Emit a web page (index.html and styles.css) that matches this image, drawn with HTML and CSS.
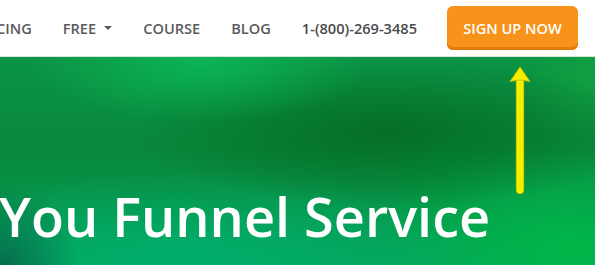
FILE: index.html
```html
<!DOCTYPE html>
<html lang="en">
<head>
<meta charset="utf-8">
<title>Funnel Service</title>
<link rel="stylesheet" href="styles.css">
</head>
<body>
<header class="topbar">
  <nav class="nav">
    <a class="nav-link nav-pricing" href="#">PRICING</a>
    <a class="nav-link" href="#">FREE <span class="caret"></span></a>
    <a class="nav-link" href="#">COURSE</a>
    <a class="nav-link" href="#">BLOG</a>
    <a class="nav-link nav-phone" href="#">1-(800)-269-3485</a>
    <a class="cta" href="#">SIGN UP NOW</a>
  </nav>
</header>
<section class="hero">
  <h1 class="hero-title">You Funnel Service</h1>
  <svg class="arrow" width="30" height="132" viewBox="0 0 30 132" aria-hidden="true">
    <path d="M15 14 L15 124" stroke="#8f8a00" stroke-opacity="0.35" stroke-width="10" stroke-linecap="round" fill="none"/>
    <path d="M15 14 L15 124" stroke="#f4ee00" stroke-width="7.5" stroke-linecap="round" fill="none"/>
    <path d="M15 1 L25 15.5 Q15 12.5 5 15.5 Z" fill="#f4ee00" stroke="#c9c000" stroke-width="0.8" stroke-linejoin="round"/>
  </svg>
</section>
</body>
</html>
```
FILE: styles.css
```css
* { box-sizing: border-box; }
html, body { margin: 0; padding: 0; }
body {
  width: 595px;
  height: 265px;
  overflow: hidden;
  font-family: "Open Sans", "Noto Sans", sans-serif;
  background: #ffffff;
}
.topbar {
  height: 57px;
  background: #ffffff;
  border-bottom: 1px solid #d6e6dc;
  display: flex;
  align-items: center;
  justify-content: flex-end;
  padding-right: 17px;
  overflow: hidden;
}
.nav {
  display: flex;
  align-items: center;
  gap: 31px;
  white-space: nowrap;
}
.nav-link {
  font-size: 14.6px;
  font-weight: 600;
  color: #5a5a5a;
  text-decoration: none;
  display: flex;
  align-items: center;
}
.nav-phone { color: #4a4a4a; margin-right: -1px; }
.caret {
  display: inline-block;
  width: 0;
  height: 0;
  margin-left: 8px;
  border-left: 4px solid transparent;
  border-right: 4px solid transparent;
  border-top: 4px solid #5a5a5a;
}
.cta {
  display: flex;
  align-items: center;
  justify-content: center;
  width: 131px;
  height: 44px;
  margin-top: -1px;
  background: #f7921a;
  border-radius: 6px;
  box-shadow: inset 0 -3px 0 #e17d0b;
  color: #ffffff;
  font-size: 14.6px;
  font-weight: 600;
  text-decoration: none;
}
.hero {
  position: relative;
  height: 208px;
  overflow: hidden;
  background:
    radial-gradient(ellipse 170px 60px at 200px 6px, rgba(10, 190, 90, 0.75), rgba(10, 190, 90, 0) 100%),
    radial-gradient(ellipse 260px 75px at 390px 75px, rgba(4, 100, 30, 0.75), rgba(4, 100, 30, 0) 100%),
    radial-gradient(ellipse 90px 70px at 600px 20px, rgba(20, 170, 60, 0.6), rgba(20, 170, 60, 0) 100%),
    radial-gradient(ellipse 70px 50px at 445px 105px, rgba(0, 150, 55, 0.55), rgba(0, 150, 55, 0) 100%),
    radial-gradient(ellipse 80px 90px at 0px 215px, rgba(6, 90, 70, 0.8), rgba(6, 90, 70, 0) 100%),
    radial-gradient(ellipse 320px 85px at 180px 200px, rgba(0, 175, 110, 0.85), rgba(0, 175, 110, 0) 100%),
    radial-gradient(ellipse 200px 110px at 570px 190px, rgba(0, 185, 70, 0.9), rgba(0, 185, 70, 0) 100%),
    linear-gradient(180deg, #0b9446 0%, #08883c 45%, #05a55a 100%);
  display: flex;
  align-items: flex-end;
}
.hero-title {
  margin: 0 0 22px -1px;
  color: #ffffff;
  font-size: 54px;
  font-weight: 600;
  line-height: 1;
  white-space: nowrap;
}
.arrow {
  position: absolute;
  left: 505px;
  top: 9px;
}
```
